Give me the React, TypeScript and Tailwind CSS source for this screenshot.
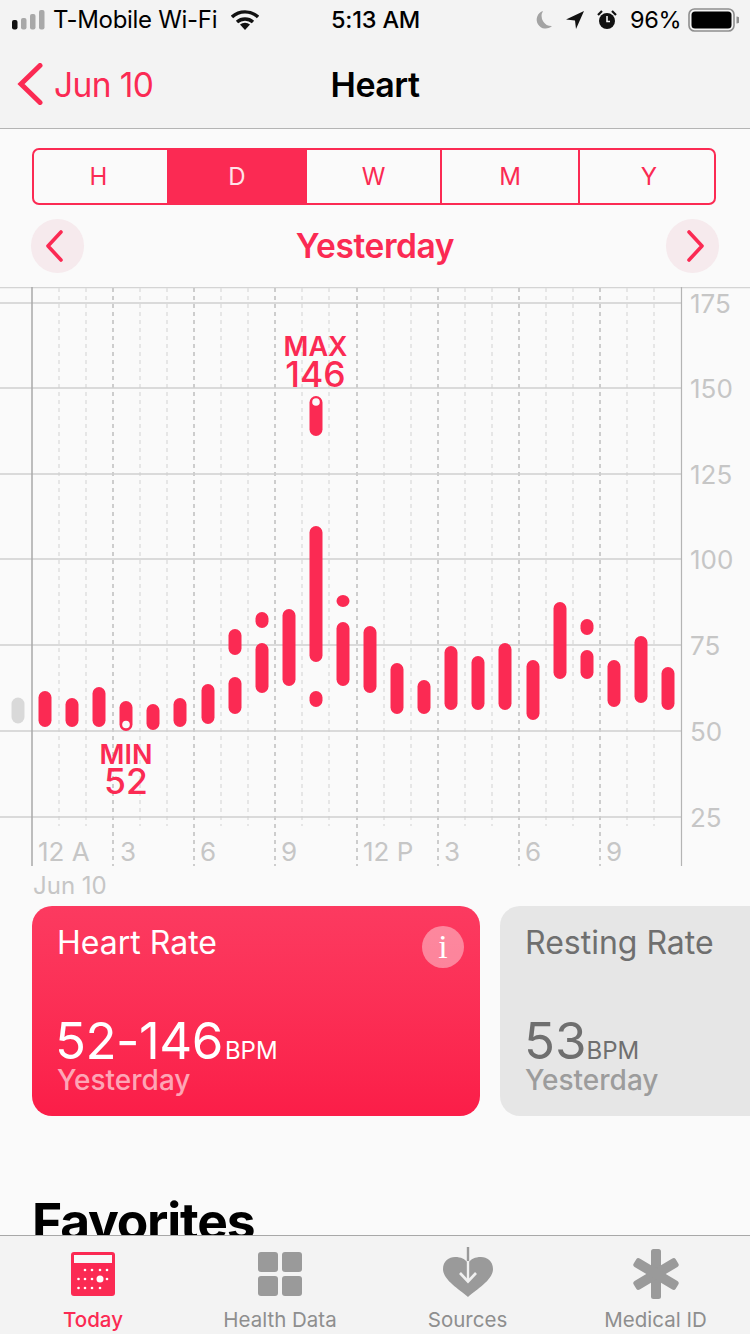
const RED = '#fb2a53';

const RANGES = [
  { label: 'H', width: 'w-[133px]', extra: 'pr-1' },
  { label: 'D', width: 'w-[140px]', extra: '' },
  { label: 'W', width: 'w-[135px]', extra: 'border-r-2' },
  { label: 'M', width: 'w-[138px]', extra: 'border-r-2' },
  { label: 'Y', width: 'flex-1', extra: 'pl-1' },
];

// heart rate segments per hour slot: [center x, top y, bottom y]
const BARS: [number, number, number][] = [
  [45, 691, 727], [72, 698, 727], [99, 687, 727], [126, 701, 731], [153, 704, 730],
  [180, 698, 727], [208, 684, 724], [235, 629, 655], [235, 677, 714], [262, 612, 628],
  [262, 643, 693], [289, 609, 686], [316, 396, 436], [316, 526, 662], [316, 691, 707],
  [343, 595, 607], [343, 622, 686], [370, 626, 693], [397, 663, 714], [424, 680, 714],
  [451, 646, 710], [478, 656, 710], [505, 643, 710], [533, 660, 720], [560, 602, 679],
  [587, 619, 635], [587, 650, 679], [614, 660, 707], [641, 636, 703], [668, 667, 710],
];

const GRID_Y = [303, 388, 474, 559, 645, 731, 817];
const Y_LABELS = ['175', '150', '125', '100', '75', '50', '25'];
const MAJOR_X = [113, 194, 275, 357, 438, 519, 600];
const MINOR_X = [59, 86, 140, 167, 221, 248, 302, 329, 384, 411, 465, 492, 546, 573, 627, 654];
const X_LABELS: [string, number][] = [
  ['12 A', 38], ['3', 120], ['6', 200], ['9', 281], ['12 P', 363], ['3', 444], ['6', 525], ['9', 606],
];

// dots on the Today tab icon: [x, y]
const TODAY_DOTS: [number, number][] = [
  [14, 18], [21, 18], [29, 18], [36, 18],
  [7.5, 27], [14, 27], [21, 27], [36, 27],
  [7.5, 36], [14, 36], [21, 36], [29, 36],
];

function StatusBar() {
  return (
    <div className="h-10 relative flex items-center text-[24px] text-black">
      <div className="flex items-center pl-3 w-[331px]">
        <svg width="33" height="20" viewBox="0 0 33 20" className="shrink-0">
          <rect x="0" y="10" width="5.5" height="9.5" rx="2" fill="#111" />
          <rect x="9" y="8" width="5.5" height="11.5" rx="2" fill="#a8a8a8" />
          <rect x="18" y="4" width="5.5" height="15.5" rx="2" fill="#a8a8a8" />
          <rect x="27" y="0" width="5.5" height="19.5" rx="2" fill="#a8a8a8" />
        </svg>
        <span className="ml-2 text-[24px] tracking-[-0.3px]">T-Mobile Wi-Fi</span>
        <svg width="28" height="20" viewBox="0 0 28 20" className="ml-[14px] shrink-0">
          <path d="M1 7 A19 19 0 0 1 27 7" fill="none" stroke="#111" strokeWidth="3.4" />
          <path d="M6 12 A12 12 0 0 1 22 12" fill="none" stroke="#111" strokeWidth="3.4" />
          <path d="M14 20 L9 14.6 A7.5 7.5 0 0 1 19 14.6 Z" fill="#111" />
        </svg>
      </div>
      <span className="font-medium text-[23.5px] tracking-[-0.2px] w-[202px]">5:13 AM</span>
      <svg width="20" height="20" viewBox="0 0 20 20" className="shrink-0">
        <path d="M10 1 A9 9 0 1 0 19 16 A10 10 0 0 1 10 1 Z" fill="#a3a3a3" />
      </svg>
      <svg width="20" height="20" viewBox="0 0 20 20" className="ml-3 shrink-0">
        <path d="M19 1 L1 9.5 L10 10.5 L11 19 Z" fill="#111" />
      </svg>
      <svg width="20" height="20" viewBox="0 0 20 20" className="ml-3 shrink-0">
        <circle cx="10" cy="11" r="8" fill="#111" />
        <path d="M10 6 V11.5 H13" fill="none" stroke="#f3f3f3" strokeWidth="1.6" />
        <path d="M1 5 L5 1 M19 5 L15 1" stroke="#111" strokeWidth="2.2" />
      </svg>
      <span className="ml-[13px] text-[23.5px] tracking-[-0.3px]">96%</span>
      <svg width="51" height="24" viewBox="0 0 51 24" className="ml-[7px] shrink-0">
        <rect x="1" y="1" width="45" height="22" rx="5.5" fill="none" stroke="#8e8e8e" strokeWidth="1.6" />
        <rect x="3.5" y="3.5" width="40" height="17" rx="3.5" fill="#000" />
        <path d="M48.5 8.5 A3.5 3.5 0 0 1 48.5 15.5 Z" fill="#8e8e8e" />
      </svg>
    </div>
  );
}

function NavBar() {
  return (
    <div className="h-[88px] border-b border-[#b4b4b4] relative flex items-center justify-center box-content">
      <div className="absolute left-[17px] top-[23px] flex items-center text-[#fb2a53]">
        <svg width="26" height="42" viewBox="0 0 26 42">
          <path d="M23 2.5 L4 21 L23 39.5" fill="none" stroke={RED} strokeWidth="5" strokeLinecap="round" />
        </svg>
        <span className="ml-[11px] mt-1 text-[33.5px] tracking-[-0.6px] leading-none">Jun 10</span>
      </div>
      <span className="text-[34px] font-semibold tracking-[-0.5px] text-black">Heart</span>
    </div>
  );
}

function RangePicker() {
  return (
    <div className="mx-8 mt-[19px] h-[57px] w-[684px] shrink-0 border-2 border-[#fb2a53] rounded-[7px] flex overflow-hidden text-[#fb2a53] text-[24px]">
      {RANGES.map((r) => (
        <div
          key={r.label}
          className={`${r.width} flex items-center justify-center border-[#fb2a53] ${r.extra} ${
            r.label === 'D' ? 'bg-[#fb2a53] text-[#ffe3e8]' : ''
          }`}
        >
          {r.label}
        </div>
      ))}
    </div>
  );
}

function DayPicker() {
  return (
    <div className="mt-[14px] h-[54px] shrink-0 px-[31px] flex items-center justify-between">
      <div className="w-[53px] h-[54px] rounded-full bg-[#f6eaed] flex items-center justify-center">
        <svg width="20" height="32" viewBox="0 0 20 32" className="-ml-[7px]">
          <path d="M17 2 L4 16 L17 30" fill="none" stroke={RED} strokeWidth="3.6" strokeLinecap="round" strokeLinejoin="round" />
        </svg>
      </div>
      <span className="text-[33.5px] font-semibold tracking-[-0.4px] text-[#fb2a53]">Yesterday</span>
      <div className="w-[53px] h-[54px] rounded-full bg-[#f6eaed] flex items-center justify-center">
        <svg width="20" height="32" viewBox="0 0 20 32" className="ml-[7px]">
          <path d="M3 2 L16 16 L3 30" fill="none" stroke={RED} strokeWidth="3.6" strokeLinecap="round" strokeLinejoin="round" />
        </svg>
      </div>
    </div>
  );
}

function Chart() {
  return (
    <svg width="750" height="579" viewBox="0 287 750 579" className="block mt-[14px] shrink-0">
      <line x1="0" x2="750" y1="287.5" y2="287.5" stroke="#d4d4d4" strokeWidth="1.5" />
      {MINOR_X.map((x) => (
        <line key={x} x1={x} x2={x} y1="288" y2="826" stroke="#e0e0e0" strokeWidth="1.5" strokeDasharray="4 4" />
      ))}
      {MAJOR_X.map((x) => (
        <line key={x} x1={x} x2={x} y1="288" y2="866" stroke="#bfbfbf" strokeWidth="1.5" strokeDasharray="4 4" />
      ))}
      {GRID_Y.map((y) => (
        <line key={y} x1="0" x2="682" y1={y} y2={y} stroke="#cfcfcf" strokeWidth="1.5" />
      ))}
      <line x1="32" x2="32" y1="287" y2="866" stroke="#a9a9a9" strokeWidth="1.5" />
      <line x1="681.5" x2="681.5" y1="287" y2="866" stroke="#b4b4b4" strokeWidth="1.2" />

      <rect x="11.5" y="697.5" width="13" height="26" rx="6.5" fill="#d9d9d9" />
      {BARS.map(([x, top, bottom]) => (
        <rect key={`${x}-${top}`} x={x - 6.5} y={top} width="13" height={bottom - top} rx="6.5" fill={RED} />
      ))}
      <circle cx="316" cy="402" r="3.8" fill="#fafafa" />
      <circle cx="126" cy="724.5" r="3.8" fill="#fafafa" />

      <g fill={RED} textAnchor="middle" dominantBaseline="central">
        <text x="315.5" y="346" fontSize="27" fontWeight="600">MAX</text>
        <text x="315.5" y="374.5" fontSize="35.5" fontWeight="500">146</text>
        <text x="126" y="754" fontSize="27" fontWeight="600">MIN</text>
        <text x="126" y="781.5" fontSize="35.5" fontWeight="500">52</text>
      </g>
      <g fill="#c6c6c6" fontSize="26" dominantBaseline="central">
        {Y_LABELS.map((l, idx) => (
          <text key={l} x="690" y={GRID_Y[idx]}>{l}</text>
        ))}
        {X_LABELS.map(([l, x]) => (
          <text key={`${l}-${x}`} x={x} y="851">{l}</text>
        ))}
      </g>
    </svg>
  );
}

function Cards() {
  return (
    <div className="flex gap-5 pl-8 h-[210px] shrink-0">
      <div className="relative w-[448px] shrink-0 rounded-[20px] bg-gradient-to-b from-[#fc3a60] to-[#fb1d48] pl-6 text-white">
        <div className="absolute right-4 top-5 w-[42px] h-[42px] rounded-full bg-white/40 flex items-center justify-center font-['Liberation_Serif',serif] text-[34px] leading-none">
          i
        </div>
        <div className="pt-[19px] pl-[1px] text-[32px] leading-9 font-normal">Heart Rate</div>
        <div className="mt-[62px] h-9 flex items-baseline leading-9 -ml-[1px]">
          <span className="text-[51px] tracking-[-0.5px]">52-146</span>
          <span className="text-[24px] ml-[2px] leading-none">BPM</span>
        </div>
        <div className="mt-[10px] text-[28px] leading-[22px] pl-[1px] font-medium text-white/60">Yesterday</div>
      </div>
      <div className="w-[300px] shrink-0 rounded-l-[20px] bg-[#e6e6e6] pl-6 text-[#6f6f6f]">
        <div className="pt-[19px] pl-[1px] text-[32px] leading-9 whitespace-nowrap">Resting Rate</div>
        <div className="mt-[62px] h-9 flex items-baseline leading-9">
          <span className="text-[51px]">53</span>
          <span className="text-[24px] leading-none">BPM</span>
        </div>
        <div className="mt-[10px] text-[28px] leading-[22px] pl-[1px] font-medium text-[#9c9c9c]">Yesterday</div>
      </div>
    </div>
  );
}

function TodayIcon() {
  return (
    <svg width="44" height="44" viewBox="0 0 44 44">
      <rect width="44" height="44" rx="3" fill={RED} />
      <rect x="3" y="3" width="38" height="8" fill="#f8f8f8" />
      {TODAY_DOTS.map(([x, y]) => (
        <circle key={`${x}-${y}`} cx={x} cy={y} r="1.3" fill="#fff" />
      ))}
      <circle cx="29" cy="27" r="3.5" fill="#fff" />
    </svg>
  );
}

function HealthDataIcon() {
  return (
    <svg width="44" height="44" viewBox="0 0 44 44" fill="#9a9a9a">
      <rect width="20" height="20" rx="3" />
      <rect x="24" width="20" height="20" rx="3" />
      <rect y="24" width="20" height="20" rx="3" />
      <rect x="24" y="24" width="20" height="20" rx="3" />
    </svg>
  );
}

function SourcesIcon() {
  return (
    <svg width="50" height="50" viewBox="0 0 50 50" className="-mb-[1px]">
      <path d="M25 50 C16 42 0 33 0 22 C0 14 6 10 12 10 C18 10 22 12 25 16 C28 12 32 10 38 10 C44 10 50 14 50 22 C50 33 34 42 25 50 Z" fill="#9a9a9a" />
      <path d="M25 0 V14" stroke="#9a9a9a" strokeWidth="2.4" />
      <path d="M25 14 V34" stroke="#f0f0f0" strokeWidth="2.4" />
      <path d="M17 26 L25 34.5 L33 26" fill="none" stroke="#f0f0f0" strokeWidth="2.6" />
    </svg>
  );
}

function MedicalIcon() {
  return (
    <svg width="48" height="50" viewBox="0 0 48 50" fill="#9a9a9a" className="-mb-[3px]">
      <rect x="19" y="0" width="10" height="50" rx="2.5" />
      <rect x="19" y="0.5" width="10" height="49" rx="2.5" transform="rotate(59 24 25)" />
      <rect x="19" y="0.5" width="10" height="49" rx="2.5" transform="rotate(-59 24 25)" />
    </svg>
  );
}

const TABS = [
  { label: 'Today', icon: <TodayIcon />, width: 'w-[186px]', active: true },
  { label: 'Health Data', icon: <HealthDataIcon />, width: 'w-[188px]', active: false },
  { label: 'Sources', icon: <SourcesIcon />, width: 'w-[187px]', active: false },
  { label: 'Medical ID', icon: <MedicalIcon />, width: 'w-[189px]', active: false },
];

function TabBar() {
  return (
    <div className="h-[99px] shrink-0 border-t border-[#a8a8a8] bg-[#f3f3f3] flex">
      {TABS.map((tab) => (
        <div key={tab.label} className={`${tab.width} flex flex-col items-center`}>
          <div className="h-[60px] flex items-end">{tab.icon}</div>
          <span className={`mt-3 text-[20.5px] leading-6 ${tab.active ? 'text-[#fb2a53] font-medium' : 'text-[#8e8e8e]'}`}>
            {tab.label}
          </span>
        </div>
      ))}
    </div>
  );
}

export default function App() {
  return (
    <div className="w-[750px] h-[1334px] overflow-hidden flex flex-col bg-[#fafafa] font-[Inter,'Noto_Sans',sans-serif]">
      <div className="bg-[#f3f3f3] shrink-0">
        <StatusBar />
        <NavBar />
      </div>
      <div className="flex-1 min-h-0 overflow-hidden">
        <RangePicker />
        <DayPicker />
        <Chart />
        <div className="h-10 pl-[33px] text-[24px] leading-10 text-[#c6c6c6]">Jun 10</div>
        <Cards />
        <h2 className="pl-8 mt-[75px] text-[51.5px] leading-[60px] font-bold tracking-[-1.2px] text-black">Favorites</h2>
      </div>
      <TabBar />
    </div>
  );
}
